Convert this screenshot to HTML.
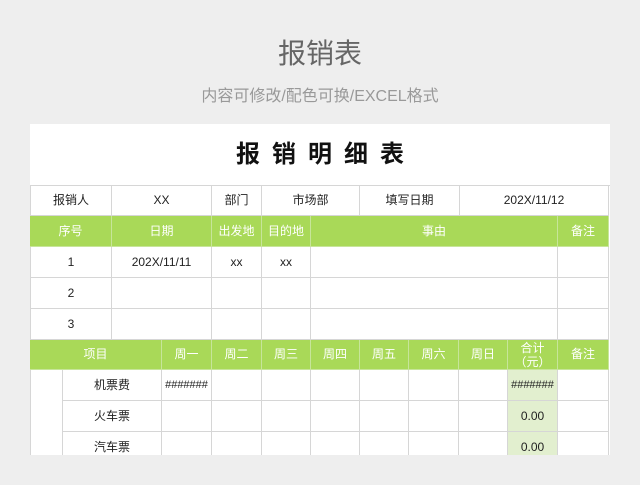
<!DOCTYPE html>
<html><head><meta charset="utf-8"><style>
*{margin:0;padding:0;box-sizing:border-box}
body{width:640px;height:485px;background:#eeeeee;position:relative;overflow:hidden;font-family:"Liberation Sans","Noto Sans CJK SC",sans-serif}
.h1{position:absolute;top:36px;left:0;width:640px;text-align:center;font-size:28px;color:#666;line-height:36px}
.h2{position:absolute;top:87px;left:0;width:640px;text-align:center;font-size:16px;color:#999;line-height:20px}
.card{position:absolute;left:30px;top:124px;width:580px;height:331px;background:#fff;overflow:hidden}
.t{position:absolute;left:0;top:0;width:580px;height:61px;text-align:center;line-height:61px;font-size:24px;font-weight:bold;letter-spacing:12px;color:#111;padding-left:12px}
.c{position:absolute;border-right:1px solid #d6d6d6;border-bottom:1px solid #d6d6d6;display:flex;align-items:center;justify-content:center;font-size:12px;color:#222;text-align:center;line-height:13px}
.g{background:#a9d958;color:#fff;border-color:#c7e59a}
.lg{background:#e2efcf}
</style></head><body>
<div class="h1">报销表</div>
<div class="h2">内容可修改/配色可换/EXCEL格式</div>
<div class="card">
<div class="t">报销明细表</div>
<div style="position:absolute;left:0;top:61px;width:580px;height:1px;background:#d6d6d6"></div>
<div style="position:absolute;left:0;top:61px;width:1px;height:300px;background:#d6d6d6"></div>
<div class="c" style="left:0;top:61px;width:82px;height:31px;border-left:1px solid #d6d6d6">报销人</div>
<div class="c" style="left:82px;top:61px;width:100px;height:31px">XX</div>
<div class="c" style="left:182px;top:61px;width:50px;height:31px">部门</div>
<div class="c" style="left:232px;top:61px;width:98px;height:31px">市场部</div>
<div class="c" style="left:330px;top:61px;width:100px;height:31px">填写日期</div>
<div class="c" style="left:430px;top:61px;width:149px;height:31px">202X/11/12</div>
<div class="c g" style="left:0;top:92px;width:82px;height:31px">序号</div>
<div class="c g" style="left:82px;top:92px;width:100px;height:31px">日期</div>
<div class="c g" style="left:182px;top:92px;width:50px;height:31px">出发地</div>
<div class="c g" style="left:232px;top:92px;width:49px;height:31px">目的地</div>
<div class="c g" style="left:281px;top:92px;width:247px;height:31px">事由</div>
<div class="c g" style="left:528px;top:92px;width:51px;height:31px">备注</div>
<div class="c" style="left:0;top:123px;width:82px;height:31px;border-left:1px solid #d6d6d6">1</div>
<div class="c" style="left:82px;top:123px;width:100px;height:31px">202X/11/11</div>
<div class="c" style="left:182px;top:123px;width:50px;height:31px">xx</div>
<div class="c" style="left:232px;top:123px;width:49px;height:31px">xx</div>
<div class="c" style="left:281px;top:123px;width:247px;height:31px"></div>
<div class="c" style="left:528px;top:123px;width:51px;height:31px"></div>
<div class="c" style="left:0;top:154px;width:82px;height:31px;border-left:1px solid #d6d6d6">2</div>
<div class="c" style="left:82px;top:154px;width:100px;height:31px"></div>
<div class="c" style="left:182px;top:154px;width:50px;height:31px"></div>
<div class="c" style="left:232px;top:154px;width:49px;height:31px"></div>
<div class="c" style="left:281px;top:154px;width:247px;height:31px"></div>
<div class="c" style="left:528px;top:154px;width:51px;height:31px"></div>
<div class="c" style="left:0;top:185px;width:82px;height:31px;border-left:1px solid #d6d6d6">3</div>
<div class="c" style="left:82px;top:185px;width:100px;height:31px"></div>
<div class="c" style="left:182px;top:185px;width:50px;height:31px"></div>
<div class="c" style="left:232px;top:185px;width:49px;height:31px"></div>
<div class="c" style="left:281px;top:185px;width:247px;height:31px"></div>
<div class="c" style="left:528px;top:185px;width:51px;height:31px"></div>
<div class="c g" style="left:0;top:216px;width:132px;height:30px">项目</div>
<div class="c g" style="left:132px;top:216px;width:50px;height:30px">周一</div>
<div class="c g" style="left:182px;top:216px;width:50px;height:30px">周二</div>
<div class="c g" style="left:232px;top:216px;width:49px;height:30px">周三</div>
<div class="c g" style="left:281px;top:216px;width:49px;height:30px">周四</div>
<div class="c g" style="left:330px;top:216px;width:49px;height:30px">周五</div>
<div class="c g" style="left:379px;top:216px;width:50px;height:30px">周六</div>
<div class="c g" style="left:429px;top:216px;width:49px;height:30px">周日</div>
<div class="c g" style="left:478px;top:216px;width:50px;height:30px;line-height:14px">合计<br>（元）</div>
<div class="c g" style="left:528px;top:216px;width:51px;height:30px">备注</div>
<div style="position:absolute;left:0;top:246px;width:33px;height:100px;border-right:1px solid #d6d6d6"></div>
<div class="c" style="left:33px;top:246px;width:99px;height:31px">机票费</div>
<div class="c" style="left:33px;top:277px;width:99px;height:31px">火车票</div>
<div class="c" style="left:33px;top:308px;width:99px;height:31px">汽车票</div>
<div class="c" style="left:132px;top:246px;width:50px;height:31px;font-size:11px">#######</div>
<div class="c" style="left:132px;top:277px;width:50px;height:31px"></div>
<div class="c" style="left:132px;top:308px;width:50px;height:31px"></div>
<div class="c" style="left:182px;top:246px;width:50px;height:31px"></div><div class="c" style="left:182px;top:277px;width:50px;height:31px"></div><div class="c" style="left:182px;top:308px;width:50px;height:31px"></div>
<div class="c" style="left:232px;top:246px;width:49px;height:31px"></div><div class="c" style="left:232px;top:277px;width:49px;height:31px"></div><div class="c" style="left:232px;top:308px;width:49px;height:31px"></div>
<div class="c" style="left:281px;top:246px;width:49px;height:31px"></div><div class="c" style="left:281px;top:277px;width:49px;height:31px"></div><div class="c" style="left:281px;top:308px;width:49px;height:31px"></div>
<div class="c" style="left:330px;top:246px;width:49px;height:31px"></div><div class="c" style="left:330px;top:277px;width:49px;height:31px"></div><div class="c" style="left:330px;top:308px;width:49px;height:31px"></div>
<div class="c" style="left:379px;top:246px;width:50px;height:31px"></div><div class="c" style="left:379px;top:277px;width:50px;height:31px"></div><div class="c" style="left:379px;top:308px;width:50px;height:31px"></div>
<div class="c" style="left:429px;top:246px;width:49px;height:31px"></div><div class="c" style="left:429px;top:277px;width:49px;height:31px"></div><div class="c" style="left:429px;top:308px;width:49px;height:31px"></div>
<div class="c lg" style="left:478px;top:246px;width:50px;height:31px;font-size:11px">#######</div>
<div class="c lg" style="left:478px;top:277px;width:50px;height:31px">0.00</div>
<div class="c lg" style="left:478px;top:308px;width:50px;height:31px">0.00</div>
<div class="c" style="left:528px;top:246px;width:51px;height:31px"></div><div class="c" style="left:528px;top:277px;width:51px;height:31px"></div><div class="c" style="left:528px;top:308px;width:51px;height:31px"></div>
</div>
</body></html>
